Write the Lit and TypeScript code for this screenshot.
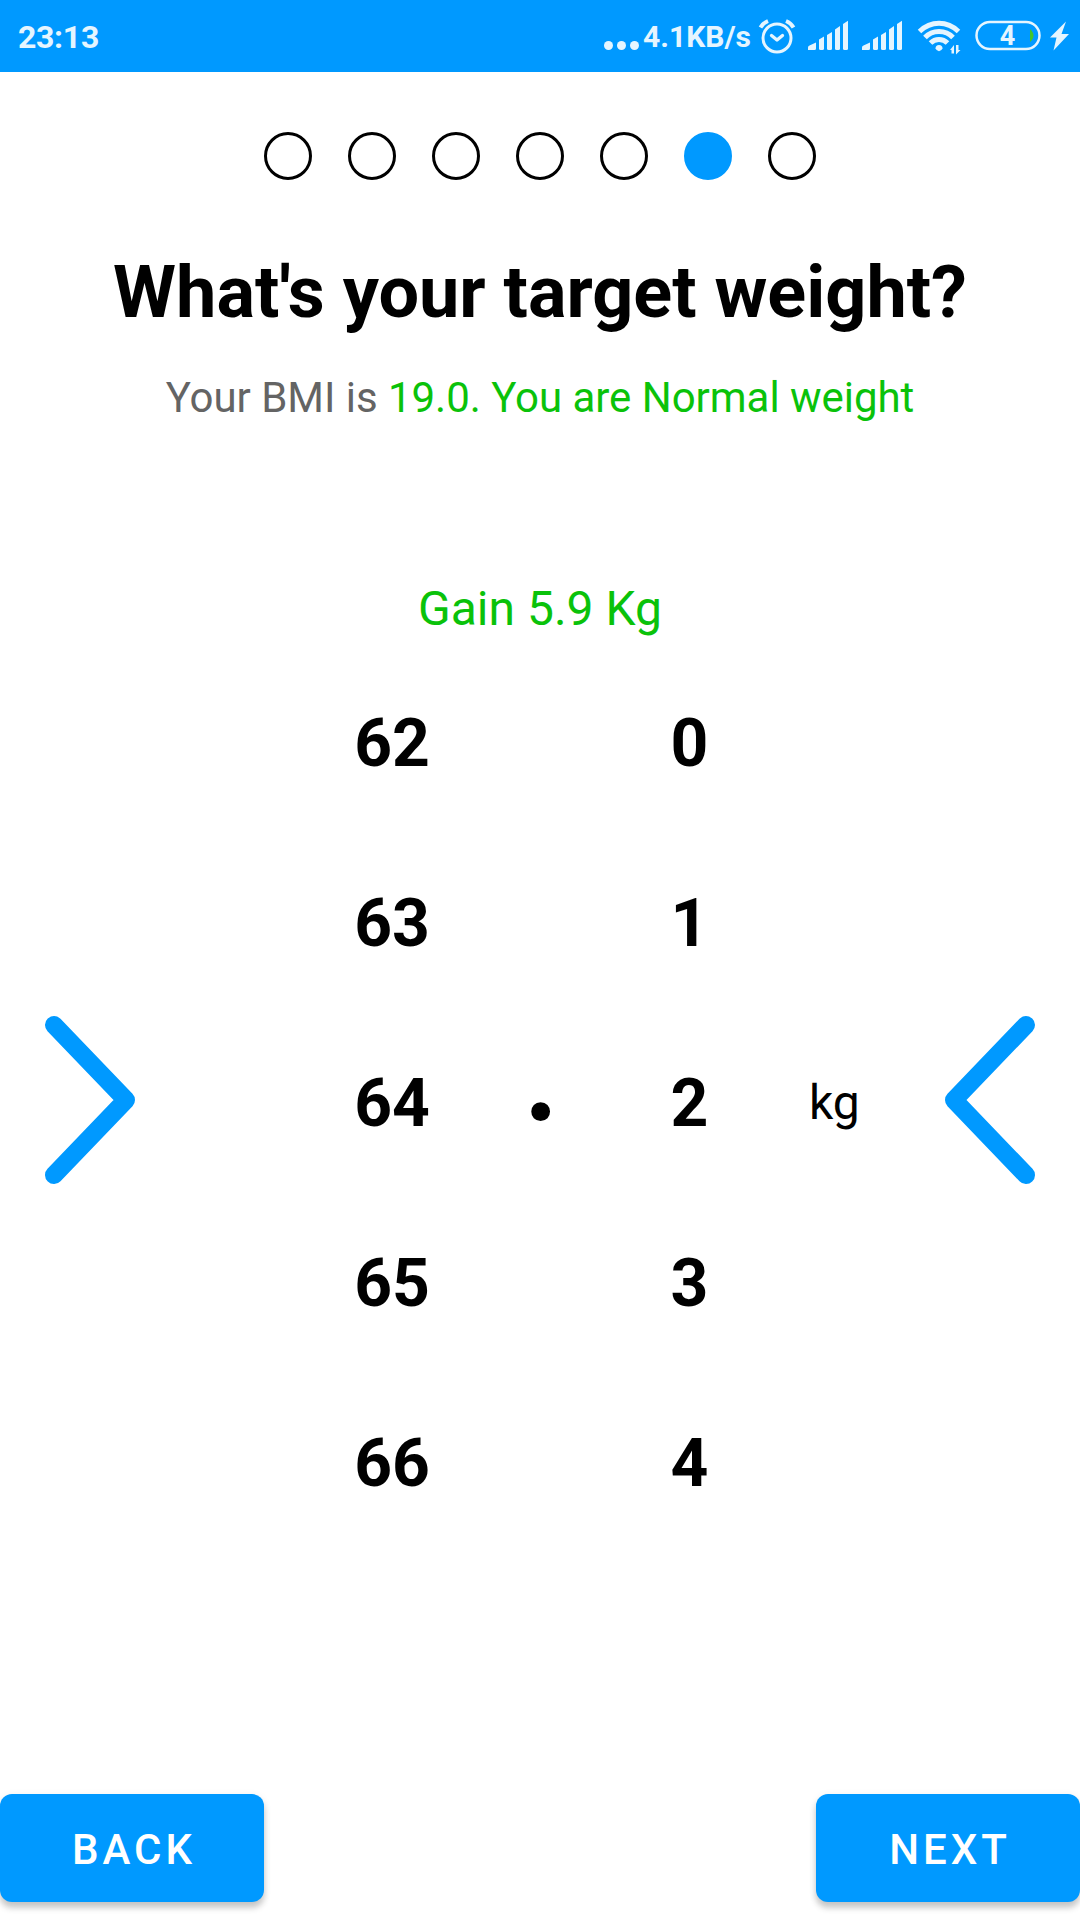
import { LitElement, html, css, svg } from "lit";
import { customElement, property } from "lit/decorators.js";

@customElement("status-bar")
class StatusBar extends LitElement {
  static styles = css`
    :host { display: block; background: #0099ff; height: 72px; color: #e5f5ff; }
    .bar { display: flex; justify-content: space-between; height: 72px; }
    .time { font-size: 32px; line-height: 74px; font-weight: 700; padding-left: 18px; letter-spacing: -0.3px; }
    .right { display: flex; }
    .speed { font-size: 30px; line-height: 73px; font-weight: 700; margin-right: 3px; }
    svg { display: block; }
  `;
  private signal(x: number) {
    return svg`<g transform="translate(${x} 0)">
      <path d="M0 50v-2.500Q0 46 1.500 45.500L8 42.500V48.500Q8 50 6.500 50Z"/>
      <path d="M11 48.500V39.500L16 36.500V48.500Q16 50 14.500 50H12.500Q11 50 11 48.500Z"/>
      <path d="M19 48.500V35L24 32V48.500Q24 50 22.500 50H20.500Q19 50 19 48.500Z"/>
      <path d="M27 48.500V29.500L32 26V48.500Q32 50 30.500 50H28.500Q27 50 27 48.500Z"/>
      <path d="M35 48.500V24L40 20.700V48.500Q40 50 38.500 50H36.500Q35 50 35 48.500Z"/>
    </g>`;
  }
  render() {
    return html`<div class="bar">
      <div class="time">23:13</div>
      <div class="right">
        <svg width="40" height="72" viewBox="604 0 40 72" fill="#e5f5ff">
          <circle cx="609.500" cy="45.500" r="4.500"/><circle cx="622.500" cy="45.500" r="4.500"/><circle cx="635.500" cy="45.500" r="4.500"/>
        </svg>
        <div class="speed">4.1KB/s</div>
        <svg width="326" height="72" viewBox="754 0 326 72" fill="#e5f5ff">
          <g fill="none" stroke="#e5f5ff" stroke-width="3">
            <circle cx="777" cy="38" r="14"/>
            <path d="M771.500 35.500l5.500 4.500 5.500-4.500" stroke-width="3.300" stroke-linecap="round" stroke-linejoin="round"/>
            <path d="M760.500 27.500q2.500-4.500 7.500-6.500M793.500 27.500q-2.500-4.500-7.500-6.500" stroke-width="4"/>
          </g>
          ${this.signal(808)}${this.signal(862)}
          <g fill="none" stroke="#e5f5ff" stroke-width="5">
            <path d="M919.500 31.500Q928 23.300 939 23.300T958.500 31.500"/>
            <path d="M925 37.500Q930.500 31.500 939 31.500T953 37.500"/>
            <path d="M930.500 43Q934 39.500 939 39.500T947.500 43"/>
          </g>
          <path d="M935.500 48.500Q935.500 45 939 45T942.500 48.500Q942 50 939 51.300Q936 50 935.500 48.500Z"/>
          <path d="M950 50l4-5v8.500h-2.500V50ZM956 45h2.500v5h2l-4.500 4.500Z"/>
          <rect x="976.500" y="22" width="63" height="27" rx="13.500" fill="none" stroke="#e5f5ff" stroke-width="2.500"/>
          <path d="M1030 29Q1033.500 32 1033.500 35.500T1030 42Z" fill="#43c52b"/>
          <text x="1007.500" y="45" text-anchor="middle" font-size="27" font-weight="700">4</text>
          <path d="M1066 21.500L1050 37.500h6.500L1053.500 50.500L1069 34h-7.500Z"/>
        </svg>
      </div>
    </div>`;
  }
}

@customElement("step-dots")
class StepDots extends LitElement {
  @property({ type: Number }) count = 7;
  @property({ type: Number }) active = 5;
  static styles = css`
    :host { display: flex; justify-content: center; gap: 36px; }
    .dot { box-sizing: border-box; width: 48px; height: 48px; border: 3px solid #000; border-radius: 50%; }
    .on { background: #0099ff; border-color: #0099ff; }
  `;
  render() {
    return Array.from({ length: this.count }, (_, i) => html`<div class="dot ${i === this.active ? "on" : ""}"></div>`);
  }
}

@customElement("app-root")
class AppRoot extends LitElement {
  static styles = css`
    :host { display: flex; flex-direction: column; height: 1920px; width: 1080px; overflow: hidden; background: #fff; color: #000; font-family: Roboto, sans-serif; }
    step-dots { margin-top: 60px; }
    h1 { margin: 71px 0 0; font-size: 72px; line-height: 84px; font-weight: 700; text-align: center; white-space: nowrap; }
    .bmi { margin-top: 38px; font-size: 42px; line-height: 50px; text-align: center; color: #646464; letter-spacing: -0.03px; }
    .good { color: #0ac20a; }
    .goal { margin-top: 158px; font-size: 48px; line-height: 56px; text-align: center; color: #0ac20a; }
    .picker { display: grid; grid-template-columns: 160px 151px 162px 136px 161px 140px 170px; height: 900px; margin-top: 17px; align-items: center; }
    .wheel { display: flex; flex-direction: column; text-align: center; font-size: 66px; line-height: 180px; font-weight: 700; }
    .point { text-align: center; font-size: 118px; line-height: 180px; font-weight: 700; padding-bottom: 50px; transform: scaleY(1.08); }
    .unit { font-size: 48px; line-height: 56px; padding: 0 0 3px 39px; }
    .arrow { display: block; margin-bottom: 8px; }
    .actions { display: flex; justify-content: space-between; margin-top: auto; margin-bottom: 18px; }
    .btn { width: 264px; height: 108px; border: 0; padding: 2px 0 0 4px; border-radius: 12px; background: #0099ff; color: #fff; font-family: inherit; font-size: 42px; font-weight: 500; letter-spacing: 4px; box-shadow: 0 6px 6px rgba(0,0,0,.19), 0 2px 8px rgba(0,0,0,.08); }
  `;
  render() {
    return html`
      <status-bar></status-bar>
      <step-dots></step-dots>
      <h1>What's your target weight?</h1>
      <div class="bmi">Your BMI is <span class="good">19.0. You are Normal weight</span></div>
      <div class="goal">Gain 5.9 Kg</div>
      <div class="picker">
        <svg class="arrow" width="160" height="180" viewBox="0 1010 160 180"><path d="M54 1025L126 1100L54 1175" fill="none" stroke="#0099ff" stroke-width="18" stroke-linecap="round" stroke-linejoin="round"/></svg>
        <div></div>
        <div class="wheel">${[62, 63, 64, 65, 66].map((n) => html`<div>${n}</div>`)}</div>
        <div class="point">.</div>
        <div class="wheel">${[0, 1, 2, 3, 4].map((n) => html`<div>${n}</div>`)}</div>
        <div class="unit">kg</div>
        <svg class="arrow" width="170" height="180" viewBox="910 1010 170 180"><path d="M1026 1025L954 1100L1026 1175" fill="none" stroke="#0099ff" stroke-width="18" stroke-linecap="round" stroke-linejoin="round"/></svg>
      </div>
      <div class="actions"><button class="btn">BACK</button><button class="btn">NEXT</button></div>
    `;
  }
}
